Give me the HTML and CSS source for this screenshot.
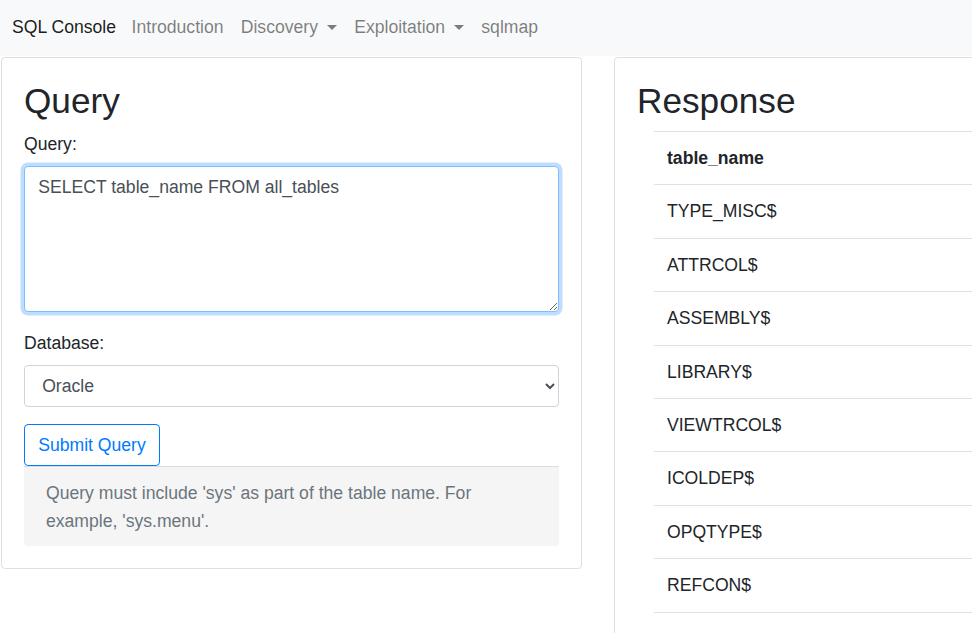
FILE: index.html
```html
<!DOCTYPE html>
<html lang="en">
<head>
<meta charset="utf-8">
<title>SQL Console</title>
<link rel="stylesheet" href="styles.css">
</head>
<body>
<nav class="navbar">
  <a class="brand" href="#">SQL Console</a>
  <a class="nav-link" href="#">Introduction</a>
  <a class="nav-link toggle" href="#">Discovery</a>
  <a class="nav-link toggle" href="#">Exploitation</a>
  <a class="nav-link" href="#">sqlmap</a>
</nav>
<main class="row">
  <section class="card query-card">
    <h2 class="title">Query</h2>
    <form class="form">
      <div class="group">
        <label class="label" for="q">Query:</label>
        <textarea id="q" class="control textarea focused">SELECT table_name FROM all_tables</textarea>
      </div>
      <div class="group">
        <label class="label" for="db">Database:</label>
        <select id="db" class="control select">
          <option>Oracle</option>
          <option>MySQL</option>
        </select>
      </div>
      <button type="button" class="btn">Submit Query</button>
      <div class="help">Query must include 'sys' as part of the table name. For example, 'sys.menu'.</div>
    </form>
  </section>
  <section class="card response-card">
    <h2 class="title">Response</h2>
    <div class="table-wrap">
      <table class="table">
        <thead><tr><th>table_name</th></tr></thead>
        <tbody>
          <tr><td>TYPE_MISC$</td></tr>
          <tr><td>ATTRCOL$</td></tr>
          <tr><td>ASSEMBLY$</td></tr>
          <tr><td>LIBRARY$</td></tr>
          <tr><td>VIEWTRCOL$</td></tr>
          <tr><td>ICOLDEP$</td></tr>
          <tr><td>OPQTYPE$</td></tr>
          <tr><td>REFCON$</td></tr>
          <tr class="last"><td></td></tr>
        </tbody>
      </table>
    </div>
  </section>
</main>
</body>
</html>
```
FILE: styles.css
```css
html, body {
  margin: 0;
  height: 633px;
  overflow: hidden;
}
body {
  font-family: "Liberation Sans", Arial, sans-serif;
  font-size: 17.6px;
  line-height: 1.5;
  color: #212529;
  background: #fff;
}
a { text-decoration: none; }

.navbar {
  display: flex;
  align-items: center;
  height: 56px;
  background: #f8f9fa;
  padding: 0 3px 0 12px;
  box-sizing: border-box;
  width: 972px;
}
.brand {
  color: rgba(0, 0, 0, 0.9);
  margin-right: 7px;
  margin-top: -2px;
}
.nav-link {
  color: rgba(0, 0, 0, 0.5);
  padding: 0 8.6px;
  margin-top: -2px;
}
.toggle::after {
  content: "";
  display: inline-block;
  vertical-align: 3px;
  margin-left: 9px;
  border-top: 5.3px solid;
  border-left: 5.3px solid transparent;
  border-right: 5.3px solid transparent;
}

.row {
  display: flex;
  align-items: flex-start;
  gap: 32px;
  padding-left: 1px;
  width: 1300px;
}
.card {
  border: 1px solid #dfdfdf;
  border-radius: 4px;
  padding: 22px;
  box-sizing: border-box;
  width: 581px;
  flex: none;
  margin-top: 1px;
}
.title {
  margin: 0 0 8.8px;
  font-size: 35.2px;
  font-weight: 500;
  line-height: 1.2;
}
.group { margin-bottom: 17.6px; }
.label {
  display: inline-block;
  margin-bottom: 8.8px;
}
.control {
  display: block;
  width: 100%;
  box-sizing: border-box;
  font-family: inherit;
  font-size: 17.6px;
  line-height: 1.5;
  color: #495057;
  background: #fff;
  border: 1px solid #ced4da;
  border-radius: 4px;
  padding: 6.6px 13.2px;
  margin: 0;
}
.textarea {
  height: 146px;
  resize: vertical;
}
.focused {
  border-color: #80bdff;
  outline: 0;
  box-shadow: 0 0 0 3.5px rgba(0, 123, 255, 0.25);
}
.select { height: 41.6px; }
.btn {
  display: inline-block;
  font-family: inherit;
  font-size: 17.6px;
  line-height: 1.5;
  color: #007bff;
  background: transparent;
  border: 1px solid #007bff;
  border-radius: 4px;
  padding: 6.6px 13.2px;
  margin: 0;
  vertical-align: top;
}
.help {
  background: #f5f5f5;
  border-top: 1px solid #dcdcdc;
  border-radius: 0 0 4px 4px;
  color: #6c757d;
  line-height: 28px;
  padding: 12px 22px 11px;
}

.response-card {
  height: 700px;
}
.table-wrap { padding-left: 17px; }
.table {
  width: 100%;
  border-collapse: collapse;
}
.table th, .table td {
  text-align: left;
  padding: 13px;
  border-top: 1px solid #dee2e6;
  line-height: 1.5;
  height: 26.4px;
}
.table th { font-weight: 700; }
```
